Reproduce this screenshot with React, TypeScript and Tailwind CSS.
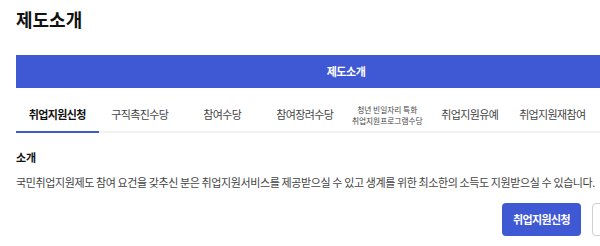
const tabs = [
  { label: '취업지원신청', active: true },
  { label: '구직촉진수당' },
  { label: '참여수당' },
  { label: '참여장려수당' },
  { label: '청년 빈일자리 특화\n취업지원프로그램수당', small: true },
  { label: '취업지원유예' },
  { label: '취업지원재참여' },
  { label: '' },
];

export default function App() {
  return (
    <div
      className="w-[600px] h-[246px] overflow-hidden bg-white text-[#222]"
      style={{ fontFamily: '"Noto Sans CJK KR", "Noto Sans", sans-serif' }}
    >
      <div className="w-[660px] ml-4">
        {/* Title */}
        <h1 className="pt-[5px] h-[33px] leading-[28px] text-[18px] font-bold text-[#111]">
          제도소개
        </h1>

        {/* Blue bar */}
        <div className="mt-[22px] h-[33px] bg-[#3f58d4] flex items-center justify-center">
          <span className="text-[11px] font-bold text-white tracking-[-0.04em]">제도소개</span>
        </div>

        {/* Tabs */}
        <div className="mt-[10px] grid grid-cols-8">
          {tabs.map((t, i) => (
            <div
              key={i}
              className={`h-[35px] flex items-center justify-center border-b-2 ${
                t.active ? 'border-[#3f58d4]' : 'border-[#f3f3f3]'
              }`}
            >
              {t.small ? (
                <span className="whitespace-pre text-center text-[7.7px] leading-[11px] text-[#444]">
                  {t.label}
                </span>
              ) : (
                <span
                  className={`text-[11px] tracking-[-0.06em] whitespace-nowrap ${
                    t.active ? 'font-bold text-[#111]' : 'text-[#444]'
                  }`}
                >
                  {t.label}
                </span>
              )}
            </div>
          ))}
        </div>

        {/* Intro */}
        <h2 className="mt-[14px] h-5 leading-5 text-[11px] font-bold text-[#111]">
          소개
        </h2>
        <p className="mt-[5px] h-5 leading-5 text-[11px] text-[#444] tracking-[-0.035em] whitespace-nowrap">
          국민취업지원제도 참여 요건을 갖추신 분은 취업지원서비스를 제공받으실 수 있고 생계를 위한 최소한의 소득도 지원받으실 수 있습니다.
        </p>

        {/* Buttons */}
        <div className="mt-[11px] flex justify-end gap-[11px]">
          <button className="w-[79px] h-[33px] rounded-[4px] bg-[#3f58d4] text-white text-[11px] font-bold tracking-[-0.06em]">
            취업지원신청
          </button>
          <button className="w-[84px] h-[33px] rounded-[4px] bg-white border border-[#cfcfcf]" aria-label="더보기" />
        </div>
      </div>
    </div>
  );
}
